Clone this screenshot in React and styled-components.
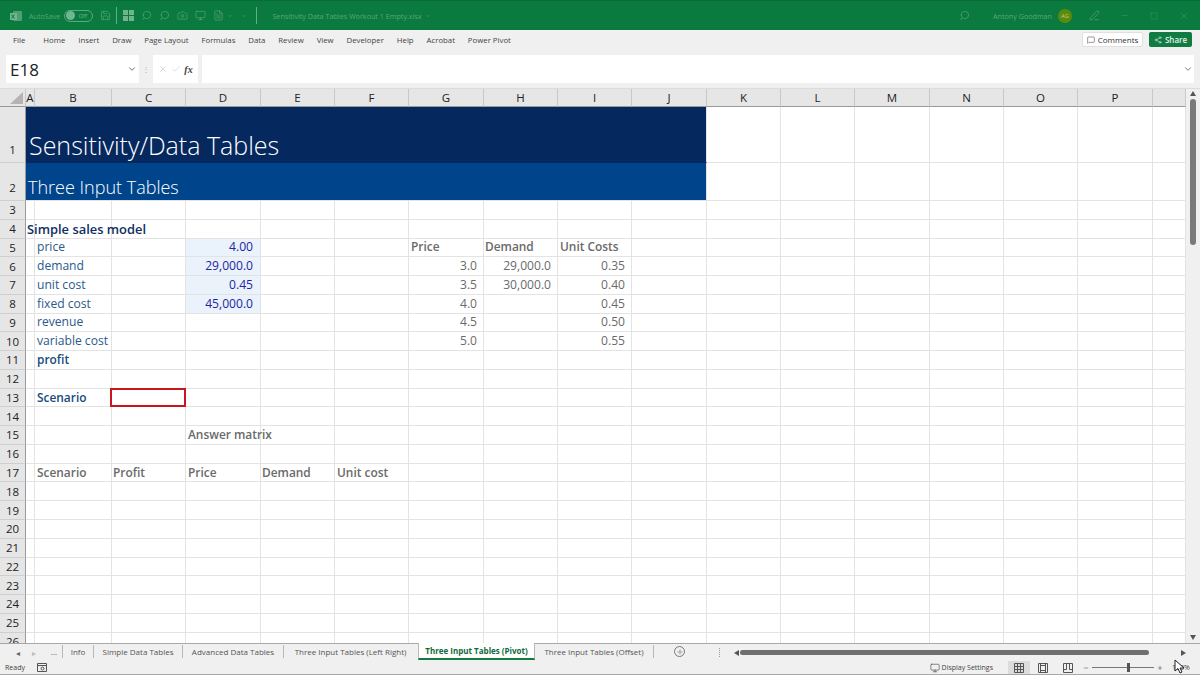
import React from "react";
import styled, { createGlobalStyle } from "styled-components";
import { Search, ChevronDown, X, Check, Minus, Square, PenLine, Save, Camera, Monitor, FileText, MessageSquare, Share2, Plus } from "lucide-react";

const Global = createGlobalStyle`
  html, body { margin: 0; padding: 0; background: #f0f0f0; }
  * { box-sizing: border-box; }
  #root { width: 1200px; height: 675px; overflow: hidden; }
`;

const Window = styled.div`
  width: 1200px; height: 675px; display: flex; flex-direction: column; overflow: hidden; position: relative;
  font-family: "Open Sans", "Noto Sans", sans-serif; background: #f0f0f0; color: #333;
`;

/* Title bar */
const TitleBar = styled.div`
  height: 30px; flex: none; background: #0b7a3e; border-top: 1px solid #0a6c37;
  display: flex; align-items: center; color: #58a67c; font-size: 7.2px; padding-left: 10px; position: relative;
`;
const TitleGroup = styled.div`
  display: flex; align-items: center; gap: ${p => p.$gap ?? 4}px; margin-left: ${p => p.$ml ?? 0}px;
`;
const TitleRight = styled(TitleGroup)`margin-left: auto;`;
const TitleSep = styled.div`width: 1px; height: 17px; background: #5fae84; margin-left: ${p => p.$ml ?? 0}px;`;
const Toggle = styled.div`
  width: 29px; height: 12px; border-radius: 6px; border: 1px solid #5aa87e; display: flex; align-items: center;
  gap: 3px; padding-left: 1px; font-size: 6px; color: #6cb58e; line-height: 1; margin-left: 4px;
`;
const ToggleKnob = styled.span`width: 9px; height: 9px; border-radius: 50%; background: #6fb692;`;
const Avatar = styled.div`
  width: 14px; height: 14px; border-radius: 50%; background: #5d8a0c; color: #b9d28d; font-size: 5.5px;
  display: flex; align-items: center; justify-content: center; margin-left: 6px;
`;
const LogoMark = styled.svg`margin-right: 7px; flex: none;`;
const Flipped = styled(Search)`transform: scaleX(-1); margin-right: ${p => p.$mr ?? 0}px;`;
const SmallChevron = styled(ChevronDown)`margin-left: ${p => p.$ml ?? 0}px;`;
const PenIcon = styled(PenLine)`margin: 0 20px 0 17px;`;
const WinIcon = styled.span`display: flex; margin-right: ${p => p.$mr}px;`;

/* Menu */
const MenuBar = styled.div`
  height: 22px; flex: none; display: flex; align-items: center; padding: 0 8px 3px 13px; background: #f0f0f0;
  font-size: 7.8px; color: #444;
`;
const MenuItem = styled.span`margin-right: ${p => p.$mr ?? 12.9}px; white-space: nowrap;`;
const MenuRight = styled.div`margin-left: auto; display: flex; align-items: center; gap: 6px;`;
const CommentsBtn = styled.div`
  width: 61px; height: 15px; background: #fff; border: 1px solid #e0e0e0; border-radius: 2px; font-size: 8px;
  display: flex; align-items: center; justify-content: center; gap: 3px; color: #333;
`;
const ShareBtn = styled.div`
  width: 43px; height: 15px; background: #107c41; border-radius: 2px; font-size: 8px; color: #e4f1ea;
  display: flex; align-items: center; justify-content: center; gap: 3px; font-weight: 600;
`;

/* Formula bar */
const FormulaBar = styled.div`
  height: 37px; flex: none; padding: 3px 6px 5px; display: flex; align-items: stretch; background: #f0f0f0;
  border-bottom: 1px solid #dcdcdc;
`;
const NameBox = styled.div`
  width: 133px; background: #fff; display: flex; align-items: center; justify-content: space-between;
  padding: 0 2px 0 4px; font-size: 17px; color: #222; border-radius: 1px;
`;
const Grip = styled.div`width: 14px; text-align: center; align-self: center; font-size: 8px; color: #aaa; line-height: 1;`;
const FxBox = styled.div`
  width: 45px; background: #fff; display: flex; align-items: center; justify-content: center; gap: 3px; color: #bbb;
`;
const FxText = styled.span`font-family: "Liberation Serif", serif; font-style: italic; font-weight: 700; font-size: 10px; color: #444;`;
const FormulaInput = styled.div`
  flex: 1; margin-left: 4px; background: #fff; display: flex; align-items: center; justify-content: flex-end;
  padding-right: 1px; color: #666;
`;

/* Sheet */
const SheetArea = styled.div`height: 554px; flex: none; display: flex; background: #fff;`;
const Grid = styled.div`
  width: 1186px; height: 554px; overflow: hidden; display: grid; align-content: start;
  grid-template-columns: 26px 9px 77px 74px 75px 74px 74px 75px 74px 74px 75px 74px 74px 75px 74px 74px 75px 33px;
  grid-template-rows: 18px 56px 38px repeat(24, 18.78px);
  font-size: 12.1px;
`;
const Corner = styled.div`
  background: #e6e6e6; border-right: 1px solid #c8c8c8; border-bottom: 1px solid #9a9a9a; position: relative;
  &::after {
    content: ""; position: absolute; right: 2px; bottom: 2px; width: 0; height: 0;
    border-style: solid; border-width: 0 0 12px 13px; border-color: transparent transparent #b4b4b4 transparent;
  }
`;
const ColHead = styled.div`
  background: #e6e6e6; border-right: 1px solid #c8c8c8; border-bottom: 1px solid #9a9a9a; color: #222;
  display: flex; align-items: center; justify-content: center; font-size: 11.5px; line-height: 1;
`;
const RowHead = styled.div`
  background: #e6e6e6; border-right: 1px solid #9a9a9a; border-bottom: 1px solid #cfcfcf; color: #222;
  display: flex; align-items: flex-end; justify-content: center; font-size: 11.5px; line-height: 1;
  padding-bottom: ${p => p.$pb ?? 3}px; overflow: hidden;
`;
const Cell = styled.div`
  border-right: 1px solid #e3e3e3; border-bottom: 1px solid #e3e3e3; background: ${p => p.$bg || "#fff"};
  display: flex; align-items: center; white-space: nowrap; min-width: 0; position: relative;
`;
const CellText = styled.span`
  position: absolute; z-index: 2; top: 50%; transform: translateY(-50%); line-height: 1;
  ${p => (p.$right ? `right: ${p.$pr ?? 6}px;` : `left: ${p.$pl ?? 1}px;`)}
  color: ${p => p.$color || "#333"}; font-weight: ${p => (p.$bold ? 600 : 400)};
  font-size: ${p => p.$size ?? (p.$bold ? 11.9 : 12.1)}px;
`;
const RedCell = styled.div`border: 2px solid #c8161d; background: #fff; margin: -1px 0 0 -2px; position: relative; z-index: 3;`;
const Banner = styled.div`
  grid-column: span 10; background: ${p => p.$bg}; color: #fff; display: flex; align-items: flex-end;
  font-size: ${p => p.$size}px; font-weight: 300; padding-left: ${p => p.$pl}px; padding-bottom: ${p => p.$pb}px;
  white-space: nowrap; line-height: 1.1; border-right: 1px solid #e3e3e3;
  border-bottom: 1px solid ${p => p.$line};
`;
const VScroll = styled.div`
  width: 14px; flex: none; background: #f0f0f0; display: flex; flex-direction: column; align-items: center;
  padding-top: 2px;
`;
const ArrowUp = styled.div`width: 0; height: 0; border: 3.5px solid transparent; border-top: 0; border-bottom: 5px solid #555;`;
const ArrowDown = styled.div`width: 0; height: 0; border: 3.5px solid transparent; border-bottom: 0; border-top: 5px solid #555; margin-top: auto; margin-bottom: 3px;`;
const VThumb = styled.div`width: 6px; height: 146px; background: #7a7a7a; border-radius: 3px; margin-top: 3px;`;

/* Tabs */
const TabBar = styled.div`
  height: 18px; flex: none; display: flex; align-items: stretch; background: #f0f0f0; border-top: 1px solid #a8a8a8;
  font-size: 8px; color: #555;
`;
const TabNav = styled.div`width: 46px; display: flex; align-items: center; padding-left: 16px; gap: 12px; color: #666; flex: none; font-size: 8px;`;
const NavDim = styled.span`color: #bbb;`;
const Tab = styled.div`
  display: flex; align-items: center; justify-content: center; width: ${p => p.$w}px; flex: none; white-space: nowrap;
  border-right: 1px solid ${p => (p.$noSep ? "transparent" : "#b8b8b8")}; margin: 1px 0 3px;
`;
const ActiveTab = styled.div`
  width: 117px; flex: none; background: #fff; color: #0f6a3a; font-weight: 700; display: flex; align-items: center;
  justify-content: center; white-space: nowrap; border-bottom: 2px solid #107c41; margin-top: -1px; margin-bottom: 1px;
  border-left: 1px solid #b8b8b8; border-right: 1px solid #b8b8b8;
`;
const AddSheet = styled.div`
  width: 11px; height: 11px; border-radius: 50%; border: 1px solid #777; margin: 2px 0 0 20px; flex: none;
  display: flex; align-items: center; justify-content: center; color: #666;
`;
const Dots = styled.div`margin-left: 34px; width: 2px; align-self: center; height: 9px; border-left: 1px dotted #999; flex: none;`;
const HScroll = styled.div`flex: 1; display: flex; align-items: center; margin-left: 13px; padding-right: 14px;`;
const ArrowLeft = styled.div`width: 0; height: 0; border: 3.5px solid transparent; border-left: 0; border-right: 5px solid #555;`;
const ArrowRight = styled.div`width: 0; height: 0; border: 3.5px solid transparent; border-right: 0; border-left: 5px solid #555; margin-left: auto;`;
const HThumb = styled.div`width: 409px; height: 5px; border-radius: 3px; background: #6f6f6f; margin-left: 1px;`;

/* Status */
const StatusBar = styled.div`
  height: 14px; flex: none; display: flex; align-items: center; background: #f0f0f0; padding-left: 5px;
  font-size: 7px; color: #444; border-bottom: 1px solid #a8a8a8;
`;
const StatusRight = styled.div`margin-left: auto; display: flex; align-items: center; height: 100%;`;
const ViewBtn = styled.div`
  width: ${p => p.$w}px; height: 100%; display: flex; align-items: center; justify-content: center;
  background: ${p => (p.$on ? "#dcdcdc" : "transparent")}; color: #555;
`;
const DisplaySettings = styled.div`display: flex; align-items: center; gap: 2px; margin-right: 15px;`;
const ZoomMinus = styled(Minus)`margin-left: 3px;`;
const Slider = styled.div`width: 62px; height: 1px; background: #777; position: relative; margin: 0 3px;`;
const SliderThumb = styled.div`position: absolute; left: 35px; top: -4px; width: 3px; height: 9px; background: #555;`;
const ZoomText = styled.span`width: 37px; padding-left: 9px;`;
const MacroIcon = styled.svg`margin-left: 12px;`;
const Pointer = styled.svg`position: absolute; left: 1174px; top: 659px; z-index: 5;`;

const COLS = "ABCDEFGHIJKLMNOPQ".split("");

const NAVY = "#0f2f5f";
const BLUE = "#2a5a8c";
const INK = "#2323a8";
const GREY = "#6a6a6a";

const CELLS = {
  A4: { t: "Simple sales model", bold: true, color: NAVY, pl: 1, size: 12.9 },
  B5: { t: "price", color: BLUE, pl: 2 }, B6: { t: "demand", color: BLUE, pl: 2 }, B7: { t: "unit cost", color: BLUE, pl: 2 },
  B8: { t: "fixed cost", color: BLUE, pl: 2 }, B9: { t: "revenue", color: BLUE, pl: 2 }, B10: { t: "variable cost", color: BLUE, pl: 2 },
  B11: { t: "profit", bold: true, color: "#164a7c", pl: 2 }, B13: { t: "Scenario", bold: true, color: "#164a7c", pl: 2 },
  D5: { t: "4.00", right: true, pr: 7, color: INK, bg: "#eaf2fb" }, D6: { t: "29,000.0", right: true, pr: 7, color: INK, bg: "#eaf2fb" },
  D7: { t: "0.45", right: true, pr: 7, color: INK, bg: "#eaf2fb" }, D8: { t: "45,000.0", right: true, pr: 7, color: INK, bg: "#eaf2fb" },
  G5: { t: "Price", bold: true, color: GREY, pl: 2 }, H5: { t: "Demand", bold: true, color: GREY, pl: 1 }, I5: { t: "Unit Costs", bold: true, color: GREY, pl: 2 },
  G6: { t: "3.0", right: true, color: GREY }, G7: { t: "3.5", right: true, color: GREY }, G8: { t: "4.0", right: true, color: GREY },
  G9: { t: "4.5", right: true, color: GREY }, G10: { t: "5.0", right: true, color: GREY },
  H6: { t: "29,000.0", right: true, color: GREY }, H7: { t: "30,000.0", right: true, color: GREY },
  I6: { t: "0.35", right: true, color: GREY }, I7: { t: "0.40", right: true, color: GREY }, I8: { t: "0.45", right: true, color: GREY },
  I9: { t: "0.50", right: true, color: GREY }, I10: { t: "0.55", right: true, color: GREY },
  D15: { t: "Answer matrix", bold: true, color: GREY, pl: 2 },
  B17: { t: "Scenario", bold: true, color: GREY, pl: 2 }, C17: { t: "Profit", bold: true, color: GREY, pl: 1 }, D17: { t: "Price", bold: true, color: GREY, pl: 2 },
  E17: { t: "Demand", bold: true, color: GREY, pl: 1 }, F17: { t: "Unit cost", bold: true, color: GREY, pl: 2 },
};

const MENU = [["File", 18], ["Home"], ["Insert"], ["Draw"], ["Page Layout"], ["Formulas"], ["Data"], ["Review"], ["View"], ["Developer"], ["Help"], ["Acrobat"], ["Power Pivot"]];

const GridCell = ({ id }) => {
  const c = CELLS[id];
  if (id === "C13") return <RedCell />;
  if (!c) return <Cell />;
  return <Cell $bg={c.bg}><CellText $right={c.right} $pr={c.pr} $color={c.color} $bold={c.bold} $pl={c.pl} $size={c.size}>{c.t}</CellText></Cell>;
};

const BlankCells = ({ row, from }) => COLS.slice(from).map(c => <Cell key={c + row} />);

const IconBlocks = () => (
  <svg width="11" height="11" viewBox="0 0 11 11" fill="#6cb58e">
    <rect x="0" y="0" width="5" height="5" /><rect x="6" y="0" width="5" height="5" />
    <rect x="0" y="6" width="5" height="5" /><rect x="6" y="6" width="5" height="5" />
  </svg>
);
const IconGrid = () => (
  <svg width="10" height="10" viewBox="0 0 10 10" fill="none" stroke="currentColor">
    <path d="M.5.5h9v9h-9zM3.5.5v9M6.5.5v9M.5 3.5h9M.5 6.5h9" />
  </svg>
);
const IconPageLayout = () => (
  <svg width="10" height="10" viewBox="0 0 10 10" fill="none" stroke="currentColor">
    <path d="M.5.5h9v9h-9zM2.5.5v9M7.5.5v9M2.5 2.5h5M2.5 7.5h5" />
  </svg>
);
const IconPageBreak = () => (
  <svg width="10" height="10" viewBox="0 0 10 10" fill="none" stroke="currentColor">
    <path d="M.5.5h9v9h-9zM.5 6.5h3v-6M9.5 6.5h-3v-6" />
  </svg>
);

export default function App() {
  const rows = Array.from({ length: 24 }, (_, i) => i + 3);
  const ti = { size: 11, strokeWidth: 1.5 };
  return (
    <Window>
      <Global />
      <TitleBar>
        <LogoMark width="12" height="12" viewBox="0 0 12 12">
          <rect x="3" y="1" width="9" height="10" rx="1" fill="#4f9f76" />
          <rect x="0" y="3" width="7" height="7" fill="#6fb692" />
          <path d="M1.5 4.5l3 4M4.5 4.5l-3 4" stroke="#0b7a3e" strokeWidth="1" />
        </LogoMark>
        <span>AutoSave</span>
        <Toggle><ToggleKnob />Off</Toggle>
        <TitleGroup $ml={7}><Save {...ti} /></TitleGroup>
        <TitleSep $ml={5} />
        <TitleGroup $ml={6} $gap={7}>
          <IconBlocks />
          <Flipped {...ti} />
          <Flipped {...ti} />
          <Camera {...ti} />
          <Monitor {...ti} />
          <FileText {...ti} />
          <SmallChevron size={6} $ml={-4} />
          <SmallChevron size={6} $ml={1} />
        </TitleGroup>
        <TitleSep $ml={9} />
        <TitleGroup $ml={15} $gap={3}>
          <span>Sensitivity Data Tables Workout 1 Empty.xlsx</span>
          <ChevronDown size={6} />
        </TitleGroup>
        <TitleRight $gap={0}>
          <Flipped {...ti} $mr={23} />
          <span>Antony Goodman</span>
          <Avatar>AG</Avatar>
          <PenIcon {...ti} />
          <WinIcon $mr={21}><Minus size={9} strokeWidth={1} /></WinIcon>
          <WinIcon $mr={21}><Square size={8} strokeWidth={1} /></WinIcon>
          <WinIcon $mr={11}><X size={10} strokeWidth={1} /></WinIcon>
        </TitleRight>
      </TitleBar>

      <MenuBar>
        {MENU.map(([m, mr]) => <MenuItem key={m} $mr={mr}>{m}</MenuItem>)}
        <MenuRight>
          <CommentsBtn><MessageSquare size={8} strokeWidth={1.5} />Comments</CommentsBtn>
          <ShareBtn><Share2 size={8} strokeWidth={1.5} />Share</ShareBtn>
        </MenuRight>
      </MenuBar>

      <FormulaBar>
        <NameBox>E18<ChevronDown size={10} color="#555" /></NameBox>
        <Grip>⋮</Grip>
        <FxBox><X size={10} strokeWidth={1.2} /><Check size={10} strokeWidth={1.2} /><FxText>fx</FxText></FxBox>
        <FormulaInput><ChevronDown size={10} /></FormulaInput>
      </FormulaBar>

      <SheetArea>
        <Grid>
          <Corner />
          {COLS.map(c => <ColHead key={c}>{c === "Q" ? "" : c}</ColHead>)}
          <RowHead $pb={7}>1</RowHead>
          <Banner $bg="#05285f" $line="#05285f" $size={25} $pl={3} $pb={3}>Sensitivity/Data Tables</Banner>
          <BlankCells row={1} from={10} />
          <RowHead $pb={7}>2</RowHead>
          <Banner $bg="#00458c" $line="#e3e3e3" $size={18} $pl={2} $pb={2}>Three Input Tables</Banner>
          <BlankCells row={2} from={10} />
          {rows.map(r => (
            <React.Fragment key={r}>
              <RowHead>{r}</RowHead>
              {COLS.map(c => <GridCell key={c + r} id={c + r} />)}
            </React.Fragment>
          ))}
        </Grid>
        <VScroll>
          <ArrowUp />
          <VThumb />
          <ArrowDown />
        </VScroll>
      </SheetArea>

      <TabBar>
        <TabNav><span>◂</span><NavDim>▸</NavDim></TabNav>
        <Tab $w={17}>...</Tab>
        <Tab $w={31}>Info</Tab>
        <Tab $w={89}>Simple Data Tables</Tab>
        <Tab $w={101}>Advanced Data Tables</Tab>
        <Tab $w={134} $noSep>Three Input Tables (Left Right)</Tab>
        <ActiveTab>Three Input Tables (Pivot)</ActiveTab>
        <Tab $w={119}>Three Input Tables (Offset)</Tab>
        <AddSheet><Plus size={8} strokeWidth={1.5} /></AddSheet>
        <Dots />
        <HScroll><ArrowLeft /><HThumb /><ArrowRight /></HScroll>
      </TabBar>

      <StatusBar>
        <span>Ready</span>
        <MacroIcon width="10" height="9" viewBox="0 0 10 9" fill="none" stroke="#555">
          <path d="M.5.5h9v8h-9zM.5 2.5h9" /><circle cx="5.5" cy="5.5" r="1.5" />
        </MacroIcon>
        <StatusRight>
          <DisplaySettings><Monitor size={10} strokeWidth={1.5} />Display Settings</DisplaySettings>
          <ViewBtn $on $w={22}><IconGrid /></ViewBtn>
          <ViewBtn $w={25}><IconPageLayout /></ViewBtn>
          <ViewBtn $w={25}><IconPageBreak /></ViewBtn>
          <ZoomMinus size={6} />
          <Slider><SliderThumb /></Slider>
          <Plus size={6} />
          <ZoomText>100%</ZoomText>
        </StatusRight>
      </StatusBar>
      <Pointer width="12" height="16" viewBox="0 0 12 16"><path d="M1 1 L1 12 L4 9.5 L6 14 L8 13 L6 9 L10 9 Z" fill="#fff" stroke="#222" strokeWidth="1" /></Pointer>
    </Window>
  );
}
